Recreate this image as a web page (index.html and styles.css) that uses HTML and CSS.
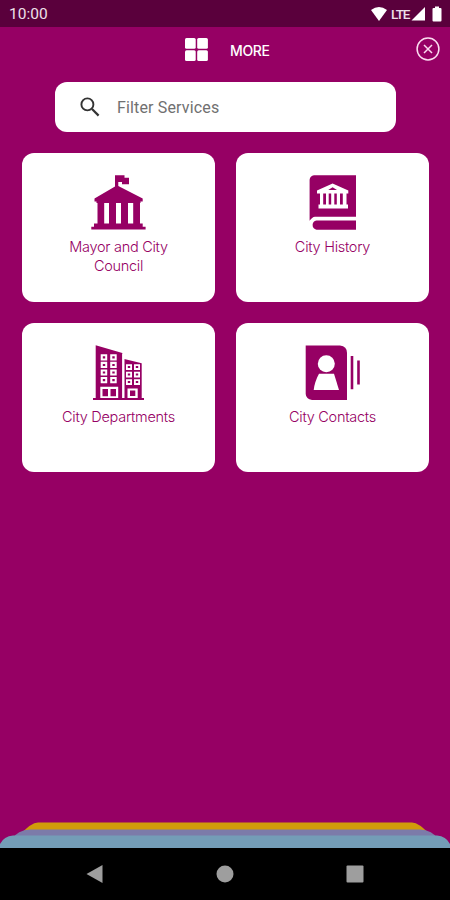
FILE: index.html
```html
<!DOCTYPE html>
<html lang="en">
    <head>
        <meta charset="utf-8">
        <title>More</title>
        <meta name="viewport" content="width=device-width, initial-scale=1.0">
        <link rel="stylesheet" href="styles.css">
    </head>
    <body>
        <div class="status">
            <span class="time">10:00</span>
            <svg class="wifi" width="18" height="16" viewBox="0 0 18 16"><path d="M1 4 Q9 -2 17 4 L9 15Z" fill="#fff"/></svg>
            <span class="lte">LTE</span>
            <svg class="signal" width="15" height="15" viewBox="0 0 15 15"><path d="M0.5 14.5 14 1V14.5Z" fill="#fff"/></svg>
            <svg class="battery" width="10" height="16" viewBox="0 0 10 16"><path d="M3 0.5H7V2H8.5Q9.5 2 9.5 3V14.5Q9.5 15.5 8.5 15.5H1.5Q.5 15.5 .5 14.5V3Q.5 2 1.5 2H3Z" fill="#fff"/></svg>
        </div>

        <header>
            <svg class="grid-icon" width="23" height="23" viewBox="0 0 23 23" fill="#fff">
                <rect width="10.7" height="10.7" rx="1.5"/>
                <rect x="12.2" width="10.7" height="10.7" rx="1.5"/>
                <rect y="12.2" width="10.7" height="10.7" rx="1.5"/>
                <rect x="12.2" y="12.2" width="10.7" height="10.7" rx="1.5"/>
            </svg>
            <h1>MORE</h1>
            <button class="close" aria-label="Close">
                <svg width="24" height="24" viewBox="0 0 24 24" fill="none" stroke="#fbdcf0" stroke-width="1.5"><circle cx="12" cy="12" r="10.9"/><path d="M8 8 16 16M16 8 8 16"/></svg>
            </button>
        </header>

        <main>
            <label class="search">
                <svg width="20" height="20" viewBox="0 0 20 20" fill="none" stroke="#333" stroke-width="1.9"><circle cx="7.4" cy="7.4" r="6"/><path d="M12 12 18.6 18.6" stroke-width="2.2"/></svg>
                <input type="text" placeholder="Filter Services">
            </label>

            <div class="cards">
                <a class="card">
                    <svg width="62" height="64" viewBox="0 0 62 64" fill="#960064">
                        <path d="M27 5.2H36.5V7.8H41V14.3H34V12H30.3V16L54.7 28.5V31.5H52.5V33H8.5V31.5H6.5V28.5L27 16.5Z"/>
                        <path d="M9.5 32H16.2V54H9.5ZM21 32H28V54H21ZM33 32H40V54H33ZM45.2 32H52V54H45.2Z"/>
                        <path d="M6 53.5H54.7V56.7H57.6V59.6H3.3V56.7H6Z"/>
                    </svg>
                    <span>Mayor and City Council</span>
                </a>
                <a class="card">
                    <svg width="62" height="64" viewBox="0 0 62 64">
                        <path d="M12 5.3H54V46.7H13Q10 47 7.6 50.8V9.7Q8 6 12 5.3Z" fill="#960064"/>
                        <path d="M14.5 50.4H54V59.7H14.5Q10.6 58.7 10.6 55 10.6 51.3 14.5 50.4Z" fill="#960064"/>
                        <path d="M30.6 13.5 46.3 20.5V23.5H44.5V34.5H46V38.5H16.5V34.5H18V23.5H15V20.5Z" fill="#fff"/>
                        <path d="M30.6 17.3 35 20H26.2ZM21.2 23.5H24V34.5H21.2ZM26.7 23.5H29.2V34.5H26.7ZM32.3 23.5H34.8V34.5H32.3ZM38 23.5H40.8V34.5H38Z" fill="#960064"/>
                    </svg>
                    <span>City History</span>
                </a>
                <a class="card">
                    <svg width="62" height="64" viewBox="0 0 62 64">
                        <path d="M7.7 5.3 34.3 13V58H36.3V19L53.7 23.3V58H56V60H5V58H7.7Z" fill="#960064"/>
                        <path d="M12.7 14.2H19.2V20.4H12.7ZM22.2 14.2H28.7V20.4H22.2ZM12.7 21.8H19.2V28H12.7ZM22.2 21.8H28.7V28H22.2ZM12.7 29.4H19.2V35.6H12.7ZM22.2 29.4H28.7V35.6H22.2ZM12.7 37H19.2V43.2H12.7ZM22.2 37H28.7V43.2H22.2ZM12.3 46.7H30.2V58H12.3Z" fill="#fff"/>
                        <path d="M38 24.2H44V30H38ZM46 24.2H52V30H46ZM38 31.7H44V37.5H38ZM46 31.7H52V37.5H46ZM38 39.2H44V45H38ZM46 39.2H52V45H46ZM39.5 48.5H49.7V58H39.5ZM34.3 14H36.3V58H34.3Z" fill="#fff"/>
                        <path d="M14.8 16.3H17.2V18.4H14.8ZM24.3 16.3H26.7V18.4H24.3ZM14.8 23.9H17.2V26H14.8ZM24.3 23.9H26.7V26H24.3ZM14.8 31.5H17.2V33.6H14.8ZM24.3 31.5H26.7V33.6H24.3ZM14.8 39.1H17.2V41.2H14.8ZM24.3 39.1H26.7V41.2H24.3ZM14.5 49H20V56.2H14.5ZM22.5 49H28V56.2H22.5Z" fill="#960064"/>
                        <path d="M39.8 26.1H42.2V28.1H39.8ZM47.8 26.1H50.2V28.1H47.8ZM39.8 33.6H42.2V35.6H39.8ZM47.8 33.6H50.2V35.6H47.8ZM39.8 41.1H42.2V43.1H39.8ZM47.8 41.1H50.2V43.1H47.8ZM42 50.5H47.3V56H42Z" fill="#960064"/>
                    </svg>
                    <span>City Departments</span>
                </a>
                <a class="card">
                    <svg width="62" height="64" viewBox="0 0 62 64">
                        <path d="M3.7 5.5H38Q45 6.3 45 13V60H10Q4 59 3.7 54Z" fill="#960064"/>
                        <circle cx="24.3" cy="23.7" r="8.5" fill="#fff"/>
                        <path d="M17 33.7H32L37 50H11.7Q12.5 42 17 33.7Z" fill="#fff"/>
                        <path d="M50 16V49.3M56.5 20.5V44.5" stroke="#960064" stroke-width="2.6"/>
                    </svg>
                    <span>City Contacts</span>
                </a>
            </div>
        </main>

        <footer>
            <!-- tops of the stacked sheets -->
            <svg class="stack" width="450" height="26" viewBox="0 0 450 26">
                <path d="M20 13Q31 .5 38 .5H412Q419 .5 430 13Z" fill="#d19b0b"/>
                <path d="M11 18Q18 7.5 30 7.5H420Q432 7.5 439 18Z" fill="#7c7ba9"/>
                <path d="M0 26V22Q4 14 13 13.5H437Q446 14 450 22V26Z" fill="#749db7"/>
            </svg>
            <nav>
                <svg width="18" height="20" viewBox="0 0 18 20"><path d="M.5 10 16.5 1V19Z" fill="#9e9e9e"/></svg>
                <svg width="18" height="18" viewBox="0 0 18 18"><circle cx="9" cy="9" r="8.5" fill="#9e9e9e"/></svg>
                <svg width="18" height="18" viewBox="0 0 18 18"><rect x=".5" y=".5" width="17" height="17" rx="1" fill="#9e9e9e"/></svg>
            </nav>
        </footer>
    </body>
</html>
```
FILE: styles.css
```css
* {
    box-sizing: border-box;
}

body {
    margin: 0;
    height: 900px;
    display: flex;
    flex-direction: column;
    overflow: hidden;
    background-color: #960064;
    font-family: Roboto, "Liberation Sans", sans-serif;
}

svg {
    display: block;
    flex: none;
}

.status {
    display: flex;
    align-items: center;
    height: 27px;
    padding: 0 8px 0 9px;
    background-color: #5a003c;
    color: #eee0ea;
}

.time {
    margin-right: auto;
    font-size: 15.5px;
    font-weight: 400;
    line-height: 27px;
    padding-top: 2px;
}

.lte {
    width: 20px;
    margin: 1px 0 0 3px;
    font-size: 13.5px;
    font-weight: 500;
    letter-spacing: -1px;
}

.battery {
    margin-left: 6px;
}

header {
    display: flex;
    align-items: center;
    height: 44px;
    padding: 0 10px 0 185px;
}

h1 {
    margin: 2px auto 0 22px;
    color: #fff;
    font: 500 14px Inter, sans-serif;
    letter-spacing: -0.4px;
}

.close {
    padding: 0;
    border: 0;
    background: none;
}

main {
    flex: 1;
    padding: 11px 21px 0 22px;
}

.search {
    display: flex;
    align-items: center;
    width: 341px;
    height: 50px;
    margin-left: 33px;
    padding-left: 25px;
    border-radius: 12px;
    background-color: #fff;
}

.search input {
    width: 250px;
    margin-left: 17px;
    padding: 0;
    border: 0;
    outline: none;
    font: 400 16px Roboto, sans-serif;
    letter-spacing: 0.15px;
}

.search input::placeholder {
    color: #707070;
}

.cards {
    display: grid;
    grid-template-columns: 193px 193px;
    grid-auto-rows: 149px;
    gap: 21px;
    margin-top: 21px;
}

.card {
    display: flex;
    flex-direction: column;
    align-items: center;
    padding-top: 17px;
    border-radius: 12px;
    background-color: #fff;
    color: #960064;
}

.card span {
    width: 130px;
    margin-top: 4px;
    font: 300 14.5px/18.5px Inter, sans-serif;
    letter-spacing: -0.28px;
    text-align: center;
}

footer nav {
    display: flex;
    align-items: center;
    justify-content: space-between;
    height: 52px;
    padding: 0 86px;
    background-color: #000;
}
```
